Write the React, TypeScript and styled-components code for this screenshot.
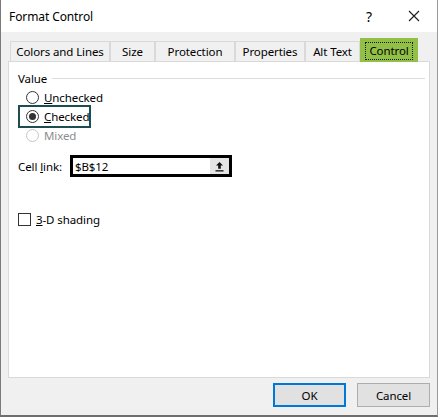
import styled, { createGlobalStyle } from "styled-components"

const GlobalStyle = createGlobalStyle`
    html, body {
        margin: 0;
        padding: 0;
        background: #f0f0f0;
    }
    * {
        box-sizing: border-box;
    }
`

const FONT = `"Segoe UI", "Noto Sans", "Open Sans", sans-serif`

const tabs = ["Colors and Lines", "Size", "Protection", "Properties", "Alt Text", "Control"]
const tabWidths = [100, 45, 80, 70, 55, 58]

function CloseIcon() {
    return (
        <svg width="12" height="12" viewBox="0 0 12 12">
            <path d="M1 1 L11 11 M11 1 L1 11" stroke="#1a1a1a" strokeWidth="1.1" fill="none" />
        </svg>
    )
}

function UploadIcon() {
    return (
        <svg width="9" height="11" viewBox="0 0 9 11">
            <path d="M4.5 1 L8 4.6 L5.8 4.6 L5.8 7.8 L3.2 7.8 L3.2 4.6 L1 4.6 Z" fill="#111" />
            <rect x="0.5" y="9.2" width="8" height="1.3" fill="#111" />
        </svg>
    )
}

function App() {
    return (
        <>
            <GlobalStyle />
            <Window>
                <TitleBar>
                    <Title>Format Control</Title>
                    <TitleButtons>
                        <Help>?</Help>
                        <Close>
                            <CloseIcon />
                        </Close>
                    </TitleButtons>
                </TitleBar>

                <Body>
                    <TabStrip>
                        {tabs.map((t, i) => (
                            <Tab key={t} width={tabWidths[i]} $active={t == "Control"}>
                                {t == "Control" ? <FocusText>{t}</FocusText> : t}
                            </Tab>
                        ))}
                    </TabStrip>

                    <Panel>
                        <GroupHeader>
                            <GroupLabel>Value</GroupLabel>
                            <GroupLine />
                        </GroupHeader>

                        <Options>
                            <Option>
                                <Radio />
                                <OptionText>
                                    <u>U</u>nchecked
                                </OptionText>
                            </Option>
                            <Highlight>
                                <Option>
                                    <Radio $checked />
                                    <OptionText>
                                        <u>C</u>hecked
                                    </OptionText>
                                </Option>
                            </Highlight>
                            <Option>
                                <Radio $disabled />
                                <OptionText $disabled>Mixed</OptionText>
                            </Option>
                        </Options>

                        <LinkRow>
                            <FieldLabel>
                                Cell <u>l</u>ink:
                            </FieldLabel>
                            <LinkInput>
                                <LinkValue>$B$12</LinkValue>
                                <PickButton>
                                    <UploadIcon />
                                </PickButton>
                            </LinkInput>
                        </LinkRow>

                        <CheckRow>
                            <CheckBox />
                            <OptionText>
                                <u>3</u>-D shading
                            </OptionText>
                        </CheckRow>
                    </Panel>

                    <Footer>
                        <Button $default>OK</Button>
                        <Button>Cancel</Button>
                    </Footer>
                </Body>
            </Window>
        </>
    )
}

export default App

const Window = styled.div`
    width: 438px;
    height: 417px;
    background: #f0f0f0;
    border-left: 1px solid #7a7a7a;
    border-right: 1px solid #9a9a9a;
    border-bottom: 2px solid #6e6e6e;
    display: flex;
    flex-direction: column;
    font-family: ${FONT};
    font-size: 11.5px;
    letter-spacing: -0.1px;
    color: #000;
`

const TitleBar = styled.div`
    height: 32px;
    background: #fff;
    display: flex;
    align-items: center;
    justify-content: space-between;
    padding-left: 8px;
`

const Title = styled.div`
    font-size: 12px;
    padding-top: 1px;
`

const TitleButtons = styled.div`
    display: flex;
    align-items: center;
    height: 100%;
`

const Help = styled.div`
    width: 46px;
    text-align: center;
    font-size: 14px;
    padding-left: 2px;
`

const Close = styled.div`
    width: 46px;
    display: flex;
    justify-content: center;
    padding-right: 1px;
`

const Body = styled.div`
    flex: 1;
    display: flex;
    flex-direction: column;
    padding: 0 7px 0 7px;
`

const TabStrip = styled.div`
    display: flex;
    align-items: flex-end;
    height: 28px;
    padding-left: 2px;
    margin-top: 1px;
`

const Tab = styled.div<{ width: number; $active?: boolean }>`
    width: ${({ width }) => `${width}px`};
    height: ${({ $active }) => ($active ? "24px" : "20px")};
    margin-bottom: ${({ $active }) => ($active ? "-1px" : "0")};
    background: ${({ $active }) => ($active ? "#92c046" : "#f0f0f0")};
    border: 1px solid ${({ $active }) => ($active ? "#92c046" : "#d9d9d9")};
    border-bottom: none;
    display: flex;
    align-items: center;
    justify-content: center;
    white-space: nowrap;
    position: relative;
    z-index: ${({ $active }) => ($active ? 1 : 0)};
`

const FocusText = styled.span`
    border: 1px dotted #1a1a1a;
    padding: 1px 3px;
    line-height: 14px;
`

const Panel = styled.div`
    height: 317px;
    background: #fff;
    border: 1px solid #d9d9d9;
    padding: 8px 4px 0 9px;
    display: flex;
    flex-direction: column;
`

const GroupHeader = styled.div`
    display: flex;
    align-items: center;
    gap: 5px;
    height: 16px;
`

const GroupLabel = styled.div``

const GroupLine = styled.div`
    flex: 1;
    height: 1px;
    background: #dcdcdc;
`

const Options = styled.div`
    display: flex;
    flex-direction: column;
    margin-top: 2px;
    padding-left: 0;
`

const Option = styled.div`
    display: flex;
    align-items: center;
    gap: 5px;
    height: 19px;
    padding-left: 8px;
`

const Highlight = styled.div`
    width: 73px;
    height: 23px;
    border: 2px solid #1d4d4f;
    margin: -2px 0;
    display: flex;
    align-items: center;

    & > div {
        padding-left: 6px;
    }
`

const Radio = styled.div<{ $checked?: boolean; $disabled?: boolean }>`
    width: 13px;
    height: 13px;
    border-radius: 50%;
    border: 1px solid ${({ $disabled }) => ($disabled ? "#c6c6c6" : "#333")};
    background: #fff;
    display: flex;
    align-items: center;
    justify-content: center;

    &::after {
        content: "";
        display: ${({ $checked }) => ($checked ? "block" : "none")};
        width: 7px;
        height: 7px;
        border-radius: 50%;
        background: #333;
    }
`

const OptionText = styled.span<{ $disabled?: boolean }>`
    color: ${({ $disabled }) => ($disabled ? "#8d8d8d" : "#000")};
    white-space: nowrap;
`

const LinkRow = styled.div`
    display: flex;
    align-items: center;
    margin-top: 10px;
    gap: 8px;
`

const FieldLabel = styled.span`
    width: 44px;
    white-space: nowrap;
`

const LinkInput = styled.div`
    width: 162px;
    height: 22px;
    border: 3px solid #000;
    display: flex;
    align-items: center;
    background: #fff;
`

const LinkValue = styled.span`
    flex: 1;
    padding-left: 2px;
`

const PickButton = styled.div`
    width: 19px;
    height: 16px;
    background: #e5e5e5;
    display: flex;
    align-items: center;
    justify-content: center;
`

const CheckRow = styled.div`
    display: flex;
    align-items: center;
    gap: 5px;
    margin-top: 35px;
`

const CheckBox = styled.div`
    width: 13px;
    height: 13px;
    border: 1px solid #333;
    background: #fff;
`

const Footer = styled.div`
    flex: 1;
    display: flex;
    justify-content: flex-end;
    align-items: flex-start;
    gap: 11px;
    padding-top: 5px;
    padding-right: 0;
`

const Button = styled.div<{ $default?: boolean }>`
    width: 73px;
    height: 24px;
    background: #e1e1e1;
    border: ${({ $default }) => ($default ? "2px solid #0078d7" : "1px solid #adadad")};
    display: flex;
    align-items: center;
    justify-content: center;
`
